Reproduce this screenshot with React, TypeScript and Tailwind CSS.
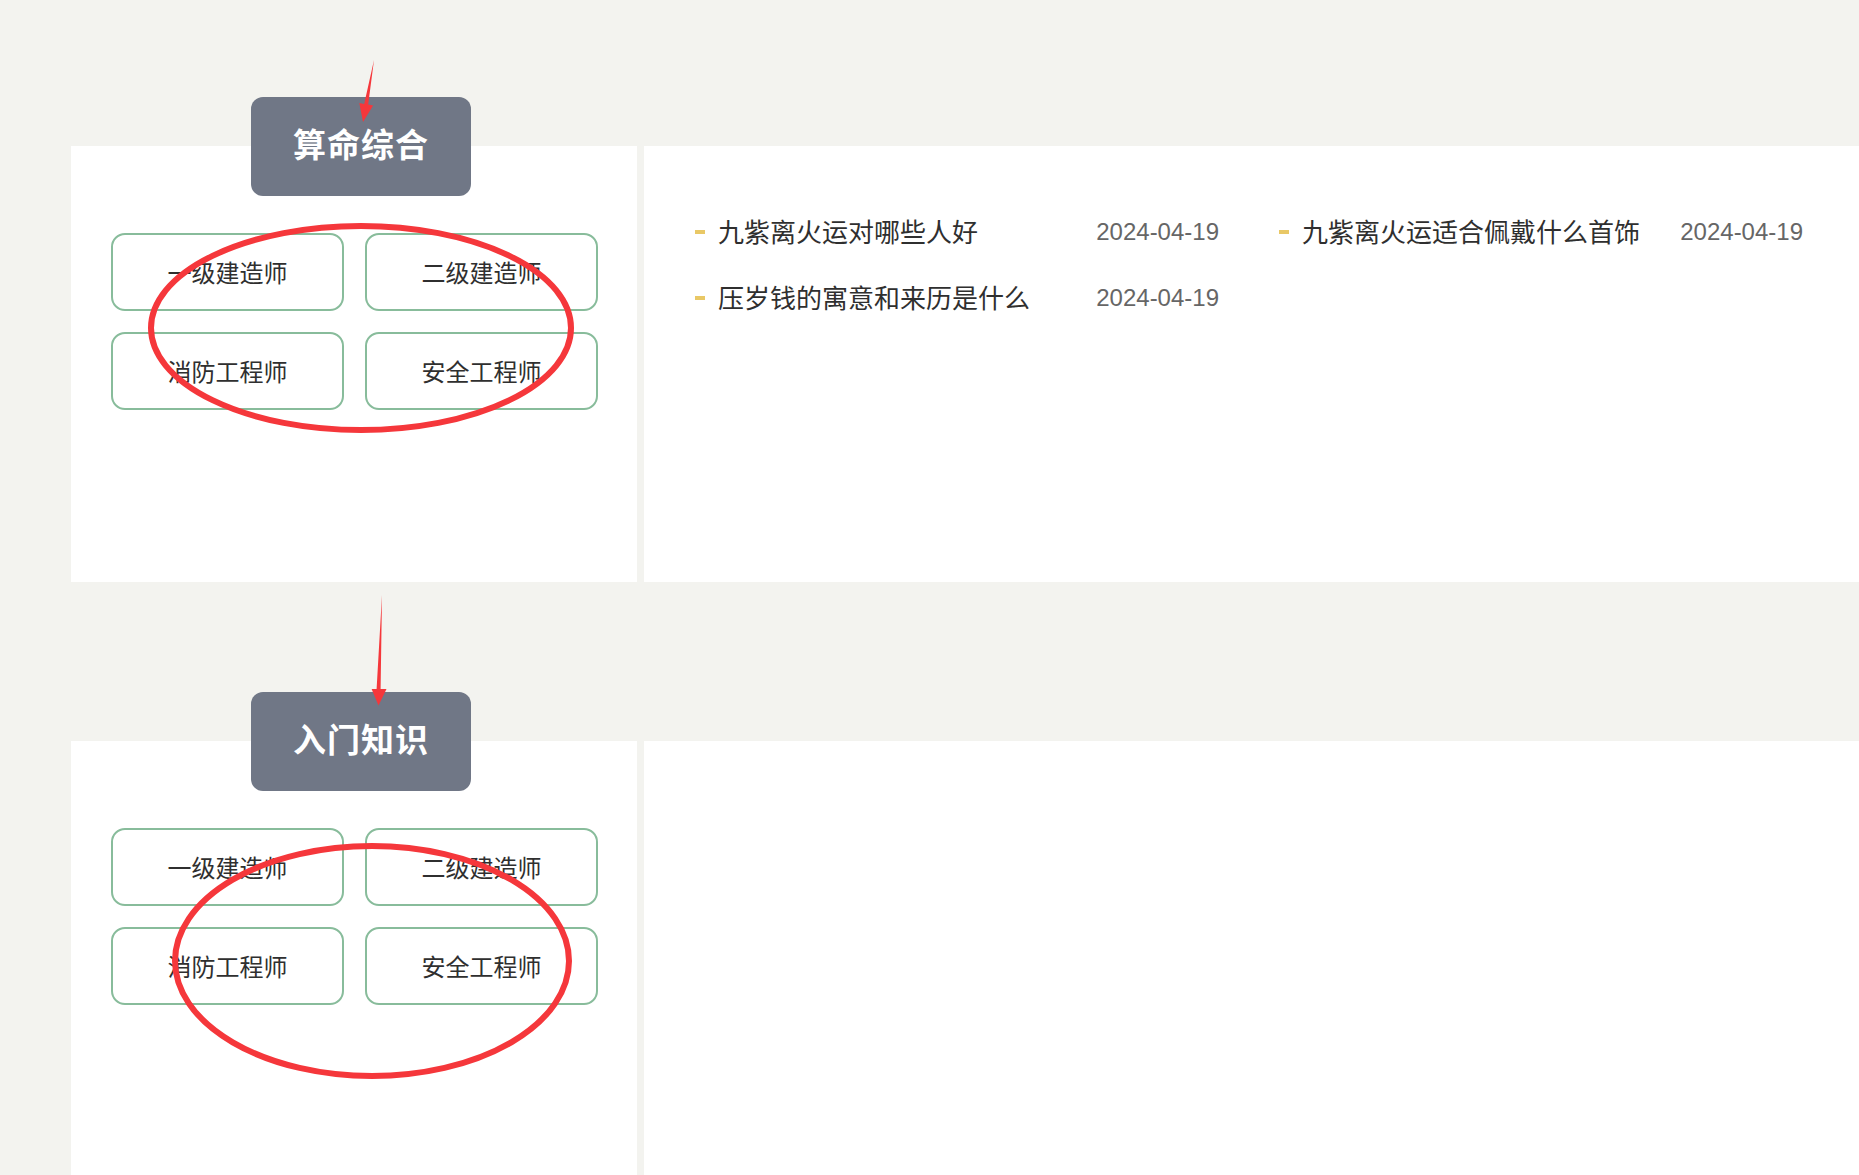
const cats = ["一级建造师", "二级建造师", "消防工程师", "安全工程师"];

type Article = { title: string; date: string };

const sections: { name: string; articles: Article[] }[] = [
  {
    name: "算命综合",
    articles: [
      { title: "九紫离火运对哪些人好", date: "2024-04-19" },
      { title: "九紫离火运适合佩戴什么首饰", date: "2024-04-19" },
      { title: "压岁钱的寓意和来历是什么", date: "2024-04-19" },
    ],
  },
  { name: "入门知识", articles: [] },
];

function Section({ name, articles }: { name: string; articles: Article[] }) {
  return (
    <section className="flex flex-col">
      {/* title tab sits over the top edge of the left panel */}
      <div className="relative z-10 ml-[180px] flex h-[99px] w-[220px] items-center justify-center rounded-[12px] bg-[#707786] pb-[6px]">
        <span className="text-[33px] font-bold tracking-[1px] text-white">{name}</span>
      </div>
      <div className="-mt-[50px] flex h-[436px] gap-[7px]">
        <div className="w-[566px] shrink-0 bg-white pl-[40px] pt-[87px]">
          <div className="grid grid-cols-[233px_233px] gap-[21px]">
            {cats.map((c) => (
              <div
                key={c}
                className="flex h-[78px] items-center justify-center rounded-[14px] border-2 border-[#88bc9b] text-[24px] text-[#2f2f2f]"
              >
                {c}
              </div>
            ))}
          </div>
        </div>
        <div className="flex-1 bg-white pl-[51px] pt-[53px]">
          <div className="grid grid-cols-[524px_524px] gap-x-[60px]">
            {articles.map((a) => (
              <div key={a.title} className="flex h-[66px] items-center justify-between">
                <div className="flex items-center">
                  <span className="mr-[13px] h-[4px] w-[10px] bg-[#e9c866]" />
                  <span className="relative -top-[2px] text-[26px] text-[#2f2f2f]">{a.title}</span>
                </div>
                <span className="font-['Liberation_Sans',sans-serif] text-[24px] text-[#666]">
                  {a.date}
                </span>
              </div>
            ))}
          </div>
        </div>
      </div>
    </section>
  );
}

export default function App() {
  return (
    <div className="relative min-h-[1175px] overflow-hidden bg-[#f3f3ef] font-['Noto_Sans_CJK_SC','Noto_Sans',sans-serif]">
      <div className="flex flex-col gap-[110px] pl-[71px] pt-[97px]">
        {sections.map((s) => (
          <Section key={s.name} name={s.name} articles={s.articles} />
        ))}
      </div>

      {/* red markup annotations */}
      <svg
        className="pointer-events-none absolute left-0 top-0 z-20"
        width="1859"
        height="1175"
      >
        <polygon
          points="374,60 368.2,104.6 373.1,105.5 363,122 359.3,103.1 364.2,104"
          fill="#f5373b"
        />
        <ellipse cx="361" cy="328" rx="210" ry="102" fill="none" stroke="#f5373b" strokeWidth="6" />
        <polygon
          points="382,595 380.6,689 386.5,689 378.5,705.5 371.6,689 376.6,689"
          fill="#f5373b"
        />
        <ellipse cx="372" cy="961" rx="197" ry="115" fill="none" stroke="#f5373b" strokeWidth="6" />
      </svg>
    </div>
  );
}
